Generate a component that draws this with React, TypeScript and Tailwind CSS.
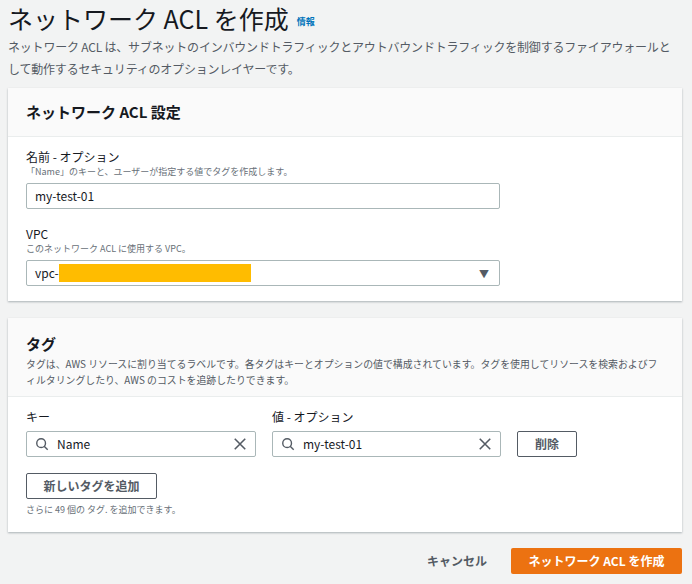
import React from "react";

const F = { fontFamily: '"Noto Sans CJK JP", "Open Sans", sans-serif' };

function Search() {
  return (
    <svg width="14" height="14" viewBox="0 0 16 16" fill="none" stroke="#545b64" strokeWidth="1.6">
      <circle cx="7" cy="7" r="5" />
      <path d="M10.5 10.5 L14.5 14.5" />
    </svg>
  );
}
function X() {
  return (
    <svg width="14" height="14" viewBox="0 0 16 16" stroke="#545b64" strokeWidth="1.8">
      <path d="M2 2 L14 14 M14 2 L2 14" />
    </svg>
  );
}

export default function App() {
  return (
    <div style={F} className="w-[692px] h-[584px] bg-[#f2f3f3] text-[#16191f] overflow-hidden pl-[8px] pr-[10px]">
      <div className="flex items-end gap-2 pt-[2px] h-[34px]">
        <h1 className="text-[25px] leading-[32px]">ネットワーク ACL を作成</h1>
        <span className="text-[9px] font-bold text-[#0073bb] mb-[6px]">情報</span>
      </div>
      <p className="text-[12px] leading-[22px] text-[#545b64] mt-[2px] tracking-[-0.2px]">
        ネットワーク ACL は、サブネットのインバウンドトラフィックとアウトバウンドトラフィックを制御するファイアウォールとして動作するセキュリティのオプションレイヤーです。
      </p>
      <div className="bg-white shadow-[0_1px_2px_rgba(0,28,36,0.3)] mt-[8px] h-[213px]">
        <div className="h-[49px] border-b border-[#eaeded] bg-[#fafafa] px-[18px] flex items-center">
          <h2 className="text-[15px] font-bold">ネットワーク ACL 設定</h2>
        </div>
        <div className="px-[18px] pt-[12px]">
          <div className="text-[12px] leading-[16px]">名前 - オプション</div>
          <div className="text-[9px] leading-[13px] text-[#687078]">「Name」のキーと、ユーザーが指定する値でタグを作成します。</div>
          <div className="mt-[5px] w-[474px] h-[26px] border border-[#aab7b8] rounded-[2px] px-[8px] flex items-center text-[12px]">my-test-01</div>
          <div className="text-[12px] leading-[16px] mt-[17px]">VPC</div>
          <div className="text-[9px] leading-[13px] text-[#687078]">このネットワーク ACL に使用する VPC。</div>
          <div className="mt-[5px] w-[474px] h-[26px] border border-[#aab7b8] rounded-[2px] pl-[8px] pr-[10px] flex items-center text-[12px]">
            vpc-<span className="inline-block w-[192px] h-[18px] bg-[#ffbc00]" />
            <span className="ml-auto text-[10px] text-[#545b64]">▼</span>
          </div>
        </div>
      </div>
      <div className="bg-white shadow-[0_1px_2px_rgba(0,28,36,0.3)] mt-[17px] h-[214px]">
        <div className="h-[79px] border-b border-[#eaeded] bg-[#fafafa] px-[18px] pt-[16px]">
          <h2 className="text-[15px] font-bold leading-[20px]">タグ</h2>
          <p className="text-[9.9px] leading-[16px] text-[#545b64] mt-[2px]">
            タグは、AWS リソースに割り当てるラベルです。各タグはキーとオプションの値で構成されています。タグを使用してリソースを検索およびフィルタリングしたり、AWS のコストを追跡したりできます。
          </p>
        </div>
        <div className="px-[18px] pt-[12px]">
          <div className="flex gap-[16px] items-end">
            <div className="w-[230px]">
              <div className="text-[12px] leading-[16px] mb-[6px]">キー</div>
              <div className="h-[26px] border border-[#aab7b8] rounded-[2px] px-[8px] flex items-center gap-[8px] text-[12px]">
                <Search /><span className="flex-1">Name</span><X />
              </div>
            </div>
            <div className="w-[229px]">
              <div className="text-[12px] leading-[16px] mb-[6px]">値 - オプション</div>
              <div className="h-[26px] border border-[#aab7b8] rounded-[2px] px-[8px] flex items-center gap-[8px] text-[12px]">
                <Search /><span className="flex-1">my-test-01</span><X />
              </div>
            </div>
            <button className="w-[60px] h-[26px] border border-[#545b64] rounded-[2px] text-[12px] font-bold text-[#545b64]">削除</button>
          </div>
          <button className="mt-[16px] w-[131px] h-[26px] border border-[#545b64] rounded-[2px] text-[12px] font-bold text-[#545b64]">新しいタグを追加</button>
          <div className="text-[9px] leading-[13px] text-[#687078] mt-[4px]">さらに 49 個の タグ. を追加できます。</div>
        </div>
      </div>
      <div className="flex justify-end items-center mt-[16px] gap-[24px]">
        <span className="text-[12px] font-bold text-[#545b64]">キャンセル</span>
        <button className="w-[171px] h-[26px] bg-[#ec7211] text-white text-[12px] font-bold rounded-[2px]">ネットワーク ACL を作成</button>
      </div>
    </div>
  );
}
